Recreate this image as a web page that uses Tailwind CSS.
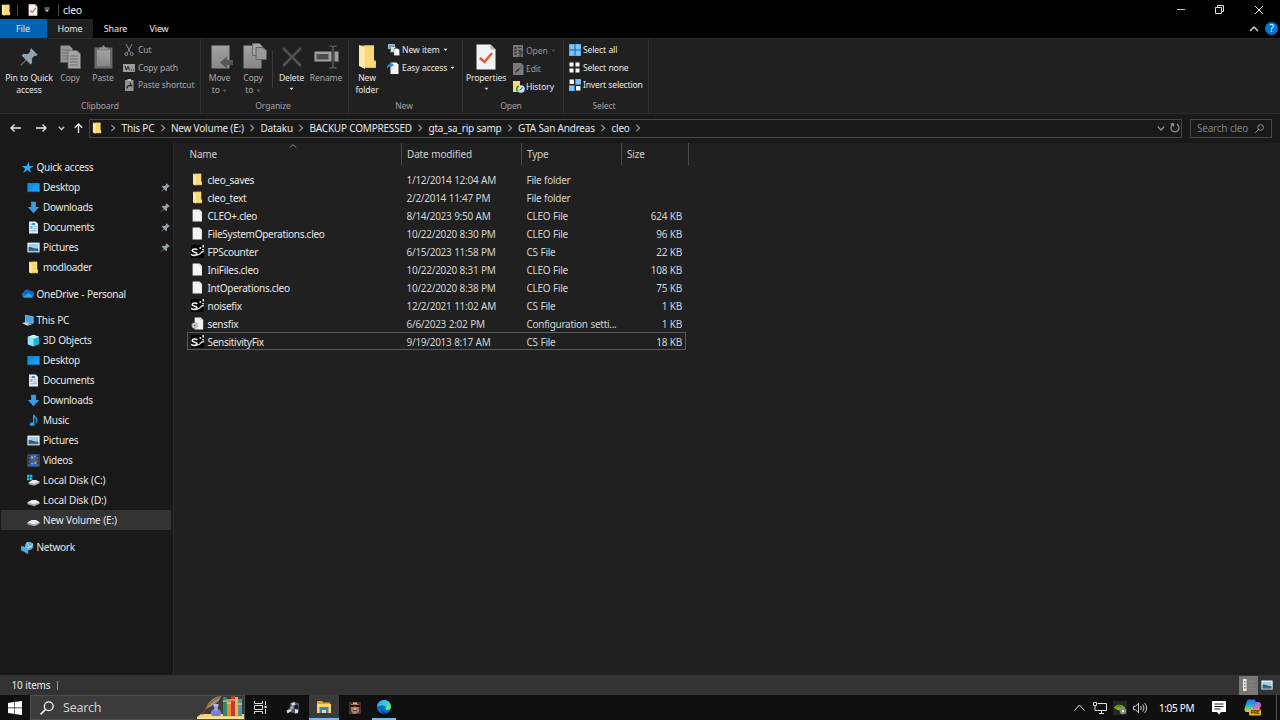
<!DOCTYPE html>
<html lang="en">
<head>
<meta charset="utf-8">
<title>cleo</title>
<script src="https://cdn.jsdelivr.net/npm/@tailwindcss/browser@4"></script>
</head>
<body class="w-[1280px] h-[720px] overflow-hidden bg-[#202020] text-[#e8e8e8] font-['Noto_Sans','Open_Sans',sans-serif] text-[10px] leading-[12px] tracking-[-0.280px] [word-spacing:0.400px] select-none">
<svg class="absolute w-0 h-0">
  <defs>
    <linearGradient id="gFold" x1="0" x2="1" y1="0" y2="1"><stop offset="0" stop-color="#f7d774"/><stop offset="1" stop-color="#fbdc7c"/></linearGradient>
    <linearGradient id="gDesk" x1="0" x2="1" y1="0" y2="1"><stop offset="0" stop-color="#0a84dc"/><stop offset="1" stop-color="#21a9ff"/></linearGradient>
    <linearGradient id="gGray" x1="0" x2="0" y1="0" y2="1"><stop offset="0" stop-color="#a2a2a2"/><stop offset="1" stop-color="#868686"/></linearGradient>
    <linearGradient id="gEdge" x1="0" x2="1" y1="0" y2="0.6"><stop offset="0" stop-color="#1b9de2"/><stop offset="0.5" stop-color="#35c1f1"/><stop offset="1" stop-color="#66eb6e"/></linearGradient>
    <linearGradient id="gCop1" x1="0" x2="0" y1="0" y2="1"><stop offset="0" stop-color="#2870ea"/><stop offset="0.5" stop-color="#22b8cf"/><stop offset="1" stop-color="#f5c518"/></linearGradient>
    <linearGradient id="gCop2" x1="0" x2="0" y1="0" y2="1"><stop offset="0" stop-color="#8f6df0"/><stop offset="0.5" stop-color="#e86ab5"/><stop offset="1" stop-color="#ff8a4c"/></linearGradient>
  </defs>
  <symbol id="folder" viewBox="0 0 16 16"><path d="M2.500 1h10v9.500h1V15H5.500z" fill="#e3b04f"/><path d="M5.500 1h7v10h.7v3.200H5.500z" fill="url(#gFold)"/><path d="M2.500.8l3.500 1.700V15.500L2.500 14z" fill="#ffe9a6"/></symbol>
  <symbol id="file" viewBox="0 0 16 16"><path d="M2 .5h8.500l3 3v12H2z" fill="#f4f4f4"/><path d="M10.500 .5v3h3z" fill="#b9b9b9"/></symbol>
  <symbol id="cs" viewBox="0 0 16 16"><path d="M0 0h16v16H0z" fill="#050505"/><path d="M7.800 6C6 4.300 1.500 4.500 1.500 6.800c0 2.700 6 1.500 6 4 0 2.500-4.500 2.500-7.500.8" fill="none" stroke="#f2f2f2" stroke-width="2"/><path d="M7.500 12c4.500 1 3.500-4.500 8.500-4" fill="none" stroke="#e0e0e0" stroke-width="1.600"/><path d="M14 0h2v3h-2zM10.500 2.500h2v2.500h-2zM13.500 5H16v1.500h-2.500z" fill="#ddd"/></symbol>
  <symbol id="conf" viewBox="0 0 16 16"><path d="M4.500.5h7.500l3 3v12H4.500z" fill="#f1f1f1"/><path d="M12 .5v3h3z" fill="#aaa"/><circle cx="4.500" cy="10.500" r="3.300" fill="#dfe5ea" stroke="#8f9aa3" stroke-width="1.600" stroke-dasharray="1.500 1"/><circle cx="4.500" cy="10.500" r="1.200" fill="#55606a"/></symbol>
  <symbol id="star" viewBox="0 0 16 16"><path d="M9.500 1l.8 5 5.200.4-4.600 2.800 1.200 5.300-4-3.400-5.600 3.600 2.600-5.200L1 6l5.800.1z" fill="#2fa9f5"/></symbol>
  <symbol id="desktop" viewBox="0 0 16 16"><path d="M.5 2.500h15v11H.5z" fill="url(#gDesk)"/><path d="M.5 12.700h15v1H.5z" fill="#0b5fa8"/></symbol>
  <symbol id="down" viewBox="0 0 16 16"><path d="M5 1h6v6.500h4L8 15 1 7.500h4z" fill="#3b9be8"/></symbol>
  <symbol id="doc" viewBox="0 0 16 16"><path d="M2.500.5h8l3 3v12h-11z" fill="#e9edf0"/><path d="M4 3.500h4v1H4zM4 6h3v3.500H4zM8 6.500h4v1H8zM8 9h4v1H8zM4 11.500h8v1H4z" fill="#7fb0da"/><path d="M6 2.500h4v2.500H6z" fill="#3b93d8"/></symbol>
  <symbol id="pic" viewBox="0 0 16 16"><path d="M.5 2h15v12H.5z" fill="#f4f4f4"/><path d="M2 3.500h12v9H2z" fill="#9ed0ee"/><path d="M2 7.500c3-1 6 2 12 2v3H2z" fill="#2e5f6c"/><path d="M2 11.300h12v1.200H2z" fill="#3d7cc0"/></symbol>
  <symbol id="cloud" viewBox="0 0 16 16"><path d="M3.500 13A3.500 3.500 0 0 1 3 6.500 5 5 0 0 1 11.500 5 4 4 0 0 1 13 13z" fill="#0f6cbd"/><path d="M2 12.500L9 7.500l5 3.200C13.800 12.500 13 13 12 13H4z" fill="#2aa4f0"/></symbol>
  <symbol id="pc" viewBox="0 0 16 16"><path d="M5.500 1.500l9.500 2v8l-9.500-1.500z" fill="#3ba7ee" stroke="#b8d7ea" stroke-width=".8"/><path d="M1 11l4.500-1 8 2.500L8 14.500z" fill="#d9dde0"/><path d="M8 12.500l3 1" stroke="#777"/></symbol>
  <symbol id="cube" viewBox="0 0 16 16"><path d="M8 .8l7 2.500v9.400L8 15.500l-7-2.800V3.300z" fill="#26b3d3"/><path d="M1 3.300l7 2.400v9.800l-7-2.800z" fill="#8fe6f4"/><path d="M8 .8l7 2.500-7 2.400-7-2.400z" fill="#c9f5fa"/></symbol>
  <symbol id="music" viewBox="0 0 16 16"><path d="M8.200 1c.3 3 4 3.500 4 6.500 0 1.300-.7 2.300-1.200 3" fill="none" stroke="#1fa2f2" stroke-width="1.700"/><path d="M7.400 1h1.700v11.500H7.400z" fill="#1fa2f2"/><ellipse cx="6.300" cy="12.500" rx="2.900" ry="2.400" fill="#1fa2f2"/></symbol>
  <symbol id="video" viewBox="0 0 16 16"><path d="M.5.500h15v15H.5z" fill="#5a5a5a"/><path d="M1.500 2h1.500v2H1.500zM1.500 6h1.500v2H1.500zM1.500 10h1.500v2H1.500zM13 2h1.500v2H13zM13 6h1.500v2H13zM13 10h1.500v2H13z" fill="#111"/><path d="M4 .5h8v7H4zM4 8.500h8v7H4z" fill="#2c5fd0"/><path d="M5 3h2.500v2.500H5zM9 9.500h2.500V12H9z" fill="#d8a637"/><path d="M8.500 2h2v2h-2zM5 11h3v2H5z" fill="#6fa7ee"/></symbol>
  <symbol id="disk" viewBox="0 0 16 16"><path d="M.5 10.500L6 7.500h5l4.500 2.500v2L9 15 .5 12.500z" fill="#a9a9a9"/><path d="M.5 10.500L6 7.500h5l4.500 2.500L9 12.500z" fill="#ececec"/></symbol>
  <symbol id="diskc" viewBox="0 0 16 16"><path d="M2 10.500L7 7.500h4l4.500 2v2L9 14.500 2 12.500z" fill="#a9a9a9"/><path d="M2 10.500L7 7.500h4l4.500 2L9 12z" fill="#ececec"/><path d="M0 1h3v3H0zM3.600 1h3v3h-3zM0 4.600h3v3H0zM3.600 4.600h3v3h-3z" fill="#1cbcf0"/></symbol>
  <symbol id="net" viewBox="0 0 16 16"><circle cx="10" cy="6" r="5.200" fill="#5aa9dc"/><path d="M7 2c3 1 1 4 4 5s3-4 3-4M6 9l6-2" stroke="#cfe8f7" fill="none" stroke-width="1.200"/><path d="M.5 6.500l8 2v6l-8-3z" fill="#35aef5" stroke="#a5d8f5" stroke-width=".6"/><path d="M5 14l4 1.500" stroke="#5db7ea"/></symbol>
  <symbol id="pin" viewBox="0 0 16 16"><path d="M10 .3L15.700 6l-1.400 1.100-1.300-.3-2.500 2.600.4 3.700-1.600 1.500-3.700-3.700L1 15.500.5 15l4.600-4.600-3.700-3.700L2.900 5.100l3.700.4 2.600-2.500-.3-1.300z"/></symbol>
  <symbol id="mag" viewBox="0 0 16 16"><circle cx="10" cy="6" r="5" fill="none" stroke="currentColor" stroke-width="1.500"/><path d="M6.500 9.500L.7 15.300" stroke="currentColor" stroke-width="1.700"/></symbol>
  <symbol id="chev" viewBox="0 0 8 8"><path d="M2.300.8L5.700 4 2.300 7.200" fill="none" stroke="#a0a0a0" stroke-width="1.100"/></symbol>
  <symbol id="drop" viewBox="0 0 6 4"><path d="M.6.600h4.800L3 3.200z" fill="currentColor"/></symbol>
  <symbol id="propsheet" viewBox="0 0 20 26"><path d="M.5.500h14l5 5v20H.5z" fill="#f3f3f3"/><path d="M14.500.5v5h5z" fill="#b5b5b5"/><path d="M4 14l4.500 4L16 9" fill="none" stroke="#e4572e" stroke-width="2.400"/></symbol>
</svg>

<div class="flex flex-col w-full h-full">
  <!-- Title bar -->
  <header class="flex items-center h-[19px] bg-black">
    <svg class="w-3 h-3"><use href="#folder"/></svg>
    <div class="w-px h-3 ml-[5px] bg-[#4a4a4a]"></div>
    <svg class="w-[10px] h-3 ml-[10px]"><use href="#propsheet"/></svg>
    <svg class="w-[6px] h-[6px] ml-[6px]" viewBox="0 0 6 6"><path d="M.5 1h5" stroke="#ccc" stroke-width=".9"/><path d="M.5 2.500h5L3 5z" fill="#ccc"/></svg>
    <div class="w-px h-3 ml-2 bg-[#4a4a4a]"></div>
    <span class="ml-1 text-[10.500px]">cleo</span>
    <div class="flex items-center ml-auto mr-[17px]">
      <svg class="w-2 h-2 mr-[30px]" viewBox="0 0 8 8"><path d="M0 3.500h8" stroke="#ccc"/></svg>
      <svg class="w-[9px] h-[9px] mr-[31px]" viewBox="0 0 9 9" fill="none" stroke="#ddd"><path d="M.5 2.500h6v6h-6zM2.500 2.500v-2h6v6h-2"/></svg>
      <svg class="w-2 h-2" viewBox="0 0 8 8"><path d="M0 0l8 8M8 0L0 8" stroke="#eee"/></svg>
    </div>
  </header>
  <nav class="flex h-[19px] bg-black text-[9px] leading-[19px] tracking-[-0.150px] text-center">
    <span class="w-[47px] pr-px bg-[#0063b1]">File</span>
    <span class="w-[46px] bg-[#202020]">Home</span>
    <span class="w-[45px]">Share</span>
    <span class="w-[42px]">View</span>
    <svg class="w-[10px] h-[6px] ml-auto mt-[7px] mr-[6px]" viewBox="0 0 10 6"><path d="M1 5l4-4 4 4" fill="none" stroke="#ccc" stroke-width="1.500"/></svg>
    <span class="w-[13px] h-[13px] mt-[3px] mr-[2px] rounded-full bg-[#0078d7] text-white leading-[13px] text-[10px]">?</span>
  </nav>

  <!-- Ribbon -->
  <section class="flex h-[76px] bg-[#202020] border-t border-b border-[#2c2c2c] text-[8.600px] leading-[12px] tracking-[-0.150px]">
    <div class="flex flex-col w-[201px] border-r border-[#333]">
      <div class="flex h-[61px]">
        <div class="flex flex-col items-center w-[58px] text-center"><svg class="w-[18px] h-[18px] mt-[9px] mb-[6px] fill-[#94a3ab]"><use href="#pin"/></svg><span class="whitespace-nowrap">Pin to Quick<br>access</span></div>
        <div class="flex flex-col items-center w-6 text-[#a8a8a8]"><svg class="w-[21px] h-6 mt-[6px] mb-[3px]" viewBox="0 0 21 24"><path d="M.5.500h9l3 3v14H.5z" fill="#969696"/><path d="M2.500 5h7M2.500 8h7M2.500 11h7M2.500 14h5" stroke="#6c6c6c"/><path d="M8 5.500h9l3.500 3.500v14.500H8z" fill="#a5a5a5" stroke="#666" stroke-width=".7"/><path d="M10 11h8M10 14h8M10 17h8M10 20h8" stroke="#6c6c6c"/></svg>Copy</div>
        <div class="flex flex-col items-center w-[38px] ml-[2px] text-[#a8a8a8]"><svg class="w-[19px] h-6 mt-[6px] mb-[3px]" viewBox="0 0 19 24"><path d="M.5 2.500h18v21H.5z" fill="#6a6a6a"/><path d="M3 5h13v16H3z" fill="url(#gGray)"/><path d="M5 2.500h2.500L9.500 0l2 2.500H14V6H5z" fill="#8c8c8c"/></svg>Paste</div>
        <div class="flex flex-col gap-[5.500px] pt-[5px] ml-px text-[#a8a8a8] whitespace-nowrap">
          <div class="flex items-center h-3 gap-[3px]"><svg class="w-3 h-3" viewBox="0 0 12 12" fill="none" stroke="#8a8a8a"><path d="M3 0l4.500 8.500M9 0L4.500 8.500"/><circle cx="3.300" cy="10" r="1.500"/><circle cx="8.700" cy="10" r="1.500"/></svg>Cut</div>
          <div class="flex items-center h-3 gap-[3px]"><svg class="w-3 h-3" viewBox="0 0 12 12"><path d="M0 2h12v8H0z" fill="#999"/><path d="M2 4l1.500 4L5 4.500l1.500 3.500M8 8h1M10 8h1" stroke="#222" fill="none"/></svg>Copy path</div>
          <div class="flex items-center h-3 gap-[3px]"><svg class="w-3 h-3" viewBox="0 0 12 12"><path d="M2 1h8.500v11H2z" fill="#929292"/><path d="M4.500 0h3.500v2H4.500z" fill="#bbb"/><path d="M4 9.500c0-3 2-3 3.500-3V5L9 7.500" fill="none" stroke="#222" stroke-width="1.300"/></svg>Paste shortcut</div>
        </div>
      </div>
      <span class="text-center text-[#a0a0a0]">Clipboard</span>
    </div>
    <div class="flex flex-col w-[148px] border-r border-[#333]">
      <div class="flex h-[61px] text-center text-[#a8a8a8]">
        <div class="flex flex-col items-center w-[37px]"><svg class="w-[22px] h-6 mt-[6px] mb-[3px] ml-[4px]" viewBox="0 0 22 24"><path d="M.5.500h18v23H.5z" fill="url(#gGray)"/><path d="M9 17.500l7-6v3.500h6v5h-6v3.500z" fill="#555"/></svg><span>Move<br>to <svg class="inline w-[5px] h-1 text-[#666]"><use href="#drop"/></svg></span></div>
        <div class="flex flex-col items-center w-[30px]"><svg class="w-[24px] h-[26px] mt-1 mb-[3px] ml-[4px]" viewBox="0 0 24 26"><path d="M.5 2.500h18v23H.5z" fill="url(#gGray)"/><path d="M9.500.5h7l3 3v9h-10z" fill="#a4a4a4" stroke="#666"/><path d="M13 4.500h7l3.500 3v9H13z" fill="#999" stroke="#606060"/></svg><span>Copy<br>to <svg class="inline w-[5px] h-1 text-[#666]"><use href="#drop"/></svg></span></div>
        <div class="w-px h-[37px] mt-3 ml-[4px] bg-[#3c3c3c]"></div>
        <div class="flex flex-col items-center w-[37px] text-[#e8e8e8]"><svg class="w-5 h-5 mt-2 mb-[5px]" viewBox="0 0 20 20"><path d="M1 1l18 18M19 1L1 19" stroke="#505050" stroke-width="2.600"/></svg>Delete<svg class="w-[5px] h-1 mt-[3px] text-[#e8e8e8]"><use href="#drop"/></svg></div>
        <div class="flex flex-col items-center w-[32px]"><svg class="w-[25px] h-6 mt-[6px] mb-[3px]" viewBox="0 0 25 24"><path d="M.5 6.500h24v10H.5z" fill="#a0a0a0"/><path d="M2.500 9h12v5.500h-12z" fill="#4c4c4c"/><path d="M17.500 6h3v11h-3z" fill="#202020"/><path d="M15.500 1h2l1.500 1 1.500-1h2M19 2v20M15.500 23h2l1.500-1 1.500 1h2" fill="none" stroke="#777"/></svg>Rename</div>
      </div>
      <span class="text-center pr-[3px] text-[#a0a0a0]">Organize</span>
    </div>
    <div class="flex flex-col w-[114px] border-r border-[#333]">
      <div class="flex h-[61px] whitespace-nowrap">
        <div class="flex flex-col items-center w-[36px] text-center"><svg class="w-[25px] h-[27px] mt-[5px] mb-px" viewBox="0 0 25 27"><path d="M4 1.500h15v15h2V24H8z" fill="#e6b95a"/><path d="M9 1.500h10V17h1.500v6H9z" fill="url(#gFold)"/><path d="M4 1l6 3v21l-6-3z" fill="#ffe9a6"/></svg><span>New<br>folder</span></div>
        <div class="flex flex-col gap-[5.500px] pt-[5px] ml-[2px]">
          <div class="flex items-center h-3 gap-[2px]"><svg class="w-[13px] h-3" viewBox="0 0 13 12"><path d="M1 0h7v5H1z" fill="#88b9d8"/><path d="M3.500 2.500h5v6h-5z" fill="#d4e2ea" stroke="#444" stroke-width=".5"/><path d="M7 4.500h4l1.500 1.500v5.500H7z" fill="#fff" stroke="#555" stroke-width=".5"/></svg>New item<svg class="w-[5px] h-1 ml-px"><use href="#drop"/></svg></div>
          <div class="flex items-center h-3 gap-[2px]"><svg class="w-[13px] h-3" viewBox="0 0 13 12"><path d="M3.500.5h6l2 2V12h-8z" fill="#f4f4f4"/><path d="M0 6.500C0 3 2 2 4 2V.5L7 3 4 5.200V4C2.500 4 1 5 .8 6.500z" fill="#2f8fd8"/></svg>Easy access<svg class="w-[5px] h-1 ml-px"><use href="#drop"/></svg></div>
        </div>
      </div>
      <span class="text-center pr-[3px] text-[#a0a0a0]">New</span>
    </div>
    <div class="flex flex-col w-[101px] border-r border-[#333]">
      <div class="flex h-[61px] whitespace-nowrap">
        <div class="flex flex-col items-center w-[46px]"><svg class="w-5 h-[26px] mt-[5px] mb-[2px]"><use href="#propsheet"/></svg>Properties<svg class="w-[5px] h-1 mt-[3px]"><use href="#drop"/></svg></div>
        <div class="flex flex-col gap-[6px] pt-[6px] ml-[4px]">
          <div class="flex items-center h-3 gap-[2px] text-[#969696]"><svg class="w-[11px] h-3" viewBox="0 0 11 12"><path d="M0 0h10v12H0z" fill="#777"/><path d="M1.500 2h2v2h-2zM1.500 5h2v2h-2zM1.500 8h2v2h-2zM5 2h3.500v1H5zM5 5h3.500v1H5z" fill="#333"/><path d="M7.500 5l3 3.500h-2V12h-2V8.500h-2z" fill="#444"/></svg>Open<svg class="w-[5px] h-1 ml-px text-[#555]"><use href="#drop"/></svg></div>
          <div class="flex items-center h-3 gap-[2px] text-[#969696]"><svg class="w-[11px] h-3" viewBox="0 0 11 12"><path d="M0 0h8l2.500 2.500V12H0z" fill="#7a7a7a"/><path d="M9.500 3L4 9l-2 1 .5-2z" fill="#333"/></svg>Edit</div>
          <div class="flex items-center h-3 gap-[2px]"><svg class="w-[12px] h-3 -mr-px" viewBox="0 0 12 12"><path d="M0 0h7v11H0z" fill="url(#gFold)"/><circle cx="8" cy="8" r="3.800" fill="#d9dee0"/><path d="M4.500 10.500A3.800 3.800 0 0 1 6 4.800" fill="none" stroke="#21a336" stroke-width="1.800"/><path d="M6.500 9l2-1 1-2" fill="none" stroke="#457"/></svg>History</div>
        </div>
      </div>
      <span class="text-center pr-[4px] text-[#a0a0a0]">Open</span>
    </div>
    <div class="flex flex-col w-[85px] border-r border-[#333]">
      <div class="flex flex-col gap-[5.500px] h-[61px] pt-[5px] pl-[5px] whitespace-nowrap">
        <div class="flex items-center h-3 gap-[3px]"><svg class="w-[12px] h-[12px] -mr-px" viewBox="0 0 11 11"><path d="M0 0h5v5H0zM6 0h5v5H6zM0 6h5v5H0zM6 6h5v5H6z" fill="#82c3f3"/><path d="M0 0h5v5H0zM6 0h5v5H6zM0 6h5v5H0zM6 6h5v5H6z" fill="none" stroke="#3d9fe6" stroke-width=".8"/></svg>Select all</div>
        <div class="flex items-center h-3 gap-[3px]"><svg class="w-[11px] h-[11px]" viewBox="0 0 11 11"><path d="M.5.500h4v4h-4zM6.500.5h4v4h-4zM.5 6.500h4v4h-4zM6.500 6.500h4v4h-4z" fill="#fff"/></svg>Select none</div>
        <div class="flex items-center h-3 gap-[3px] tracking-[-0.200px]"><svg class="w-[12px] h-[12px] -mr-px" viewBox="0 0 11 11"><path d="M.5.500h4v4h-4zM6.500 6.500h4v4h-4z" fill="#fff"/><path d="M6 0h5v5H6zM0 6h5v5H0z" fill="#82c3f3" stroke="#3d9fe6" stroke-width=".6"/></svg>Invert selection</div>
      </div>
      <span class="text-center pr-[4px] text-[#a0a0a0]">Select</span>
    </div>
  </section>

  <!-- Address bar -->
  <section class="flex items-center h-[29px] pb-px bg-[#191919]">
    <svg class="w-[11px] h-[8px] ml-[10px]" viewBox="0 0 11 8" fill="none" stroke="#eee" stroke-width="1.300"><path d="M11 4H1M4.500.500L1 4l3.500 3.500"/></svg>
    <svg class="w-[11px] h-[8px] ml-[15px]" viewBox="0 0 11 8" fill="none" stroke="#eee" stroke-width="1.300"><path d="M0 4h10M6.500.500L10 4 6.500 7.500"/></svg>
    <svg class="w-[7px] h-[5px] ml-[11px]" viewBox="0 0 7 5" fill="none" stroke="#ccc" stroke-width="1.300"><path d="M.8.800l2.700 2.700L6.200.8"/></svg>
    <svg class="w-[9px] h-[10px] ml-[9px]" viewBox="0 0 9 10" fill="none" stroke="#eee" stroke-width="1.300"><path d="M4.500 10V1M.8 4.700L4.500 1l3.700 3.700"/></svg>
    <div class="flex items-center w-[1093px] h-[19px] ml-[6px] border border-[#484848]">
      <svg class="w-3 h-3 ml-px"><use href="#folder"/></svg>
      <div id="crumbs" class="flex items-center ml-[2px] whitespace-nowrap tracking-[-0.200px] [word-spacing:0]"></div>
      <svg class="w-[8px] h-[5px] ml-auto mr-[5px]" viewBox="0 0 8 5" fill="none" stroke="#9a9a9a" stroke-width="1.200"><path d="M.8.600L4 4 7.200.6"/></svg>
      <svg class="w-[10px] h-[10px] mr-px" viewBox="0 0 10 10" fill="none" stroke="#9a9a9a" stroke-width="1.200"><path d="M6.800 1.300a4 4 0 1 1-3.600 0M.8.800h2.700v2.800"/></svg>
    </div>
    <div class="flex items-center justify-between w-[82px] h-[19px] ml-2 pl-[6px] pr-[7px] border border-[#484848] text-[#808080] tracking-[-0.250px]">Search cleo<svg class="w-[9px] h-[9px] text-[#aaa]"><use href="#mag"/></svg></div>
  </section>

  <main class="flex flex-1 min-h-0">
    <aside id="tree" class="w-[174px] pt-[14px] bg-[#191919] border-r border-[#2b2b2b]"></aside>
    <section class="flex-1 relative pl-[13px]">
      <div class="flex h-[22px] pl-px leading-[23px] text-[#d0d0d0] tracking-[-0.170px]">
        <svg class="absolute left-[115px] top-[1px] w-[8px] h-[4px]" viewBox="0 0 7 4"><path d="M.5 3.500l3-3 3 3" fill="none" stroke="#aaa" stroke-width=".8"/></svg>
        <span class="w-[214px] pl-[1.500px] border-r border-[#484848]">Name</span><span class="w-[120px] pl-[5px] border-r border-[#484848]">Date modified</span><span class="w-[100px] pl-[5px] border-r border-[#484848]">Type</span><span class="w-[67px] pl-[5px] border-r border-[#484848]">Size</span>
      </div>
      <div id="files" class="mt-[5px]"></div>
    </section>
  </main>

  <!-- Status bar -->
  <footer class="flex items-center h-[20px] pl-[11.500px] bg-[#333] tracking-[-0.200px]">
    <span>10 items</span><div class="w-px h-[9px] ml-[7px] bg-[#999]"></div>
    <div class="flex items-center justify-center w-[19px] h-[19px] ml-auto bg-[#777]"><svg class="w-[13px] h-[12px]" viewBox="0 0 13 12"><path d="M1 0h3.500v12H1z" fill="#eee"/><path d="M2 2h1.500v1.500H2zM2 8h1.500v1.500H2z" fill="#c55"/><path d="M2 5h1.500v1.500H2z" fill="#57a"/><path d="M5.500 2.500H13M5.500 6H13M5.500 9.500H13" stroke="#858585"/></svg></div>
    <svg class="w-3 h-3 ml-[3px] mr-[7px]"><use href="#pic"/></svg>
  </footer>

  <!-- Taskbar -->
  <footer class="flex items-center h-[25px] bg-[#101010]">
    <svg class="w-[14px] h-[14px] ml-2" viewBox="0 0 14 14" fill="#fff"><path d="M0 2l6-.9v5.500H0zM6.600 1L14 0v6.600H6.600zM0 7.300h6v5.500L0 12zM6.600 7.300H14V14l-7.400-1z"/></svg>
    <div class="flex items-center w-[215px] h-[25px] ml-2 pl-[9px] bg-[#3b3b3b] border border-[#4d4d4d] text-[12.500px] text-[#cfcfcf] tracking-[-0.200px]">
      <svg class="w-[14px] h-[14px] text-white mr-[9px]"><use href="#mag"/></svg><span>Search</span>
      <svg class="w-[47px] h-[23px] ml-auto" viewBox="0 0 47 23"><path d="M0 21l4-3h43v5H0z" fill="#f2cf7c"/><path d="M0 21h47v2H0z" fill="#fbe3a0"/><path d="M8 14C11 6 16 1 24 0c-1 6-7 9-15 13z" fill="#a58a6c"/><path d="M5 19C9 10 15 4 23 1" fill="none" stroke="#6f5a48"/><path d="M17 10h4v3c5 2 4 7 1 7h-6c-3-1-3-6 1-7z" fill="#7583c9"/><path d="M17.500 11h3v4h-3z" fill="#9aa5e0"/><path d="M16.500 8h5v2.500h-5z" fill="#b8bfe6"/><path d="M26 1h4v19h-4z" fill="#2f8a68"/><path d="M30 3h4v17h-4z" fill="#e5883a"/><path d="M34 0h4v20h-4z" fill="#c43a2e"/><path d="M38 1h3v19h-3z" fill="#f0b34c"/><path d="M41 3h4v17h-4z" fill="#4f9b93"/><path d="M26 5h4M30 7h4M34 4h4M41 8h4" stroke="#f7dfa0"/></svg>
    </div>
    <div class="flex items-center justify-center w-[32px] h-full"><svg class="w-[15px] h-[13px] ml-[-2px]" viewBox="0 0 15 13" fill="none" stroke="#ddd"><path d="M1.500 0v2.500h8V0M1.500 13v-2.500h8V13M1.500 4.500h8v4h-8zM12.500 0v4M12.500 8v5"/><path d="M11.500 5h2v2h-2z" fill="#fff" stroke="none"/></svg></div>
    <div class="flex items-center justify-center w-[32px] h-full"><svg class="w-[14px] h-[14px]" viewBox="0 0 14 14"><path d="M4 2.500l4-2 5 2v8l-4 2-5-1.500-3.500 1 1-3 2-2z" fill="#4c5560"/><path d="M5 2.500L8.500 1l1 2.500-3 1.500zM.5 9.500l4-1.500 1 2-4 2.500zM9 8l3 1v3l-3 .5z" fill="#d5dade"/><path d="M4 6l3-1 1 2-3 2z" fill="#9eabb8"/><path d="M8 5l3-1 2 3-4 1z" fill="#15181c"/></svg></div>
    <div class="flex items-center justify-center w-[30px] h-full bg-[#3a3a3a] border-b-2 border-[#76b9ed]"><svg class="w-[14px] h-3" viewBox="0 0 14 12"><path d="M0 0h5l1.500 1.500H13V4H0z" fill="#e8a313"/><path d="M0 3h14v9H0z" fill="#ffd767"/><path d="M2.500 6h9v6H9V9H5v3H2.500z" fill="#2f86d6"/></svg></div>
    <div class="flex items-center justify-center w-[31px] h-full"><svg class="w-3 h-3" viewBox="0 0 12 12"><path d="M0 0h12v12H0z" fill="#4b3025"/><path d="M2 2h8v8l-3 2H4L2 9z" fill="#a87862"/><path d="M1 3h10v2H7L6 4 5 5H1z" fill="#19110f"/><path d="M4 8.500h4M0 10l3 2M9 12l3-3" stroke="#6a4436"/><path d="M4 .5h4v1.500H4zM5 6h2v1.500H5z" fill="#d9b39a"/></svg></div>
    <div class="flex items-center justify-center w-[24px] ml-[2px] h-full border-b-2 border-[#76b9ed]"><svg class="w-[14px] h-[14px]" viewBox="0 0 14 14"><circle cx="7" cy="7" r="7" fill="#0c6cc0"/><path d="M0 7a7 7 0 0 1 14-.3c0 2.300-1.700 3.300-3.500 3.300-1.500 0-2.500-.7-2-1.500.6-1 .5-3.300-2.500-3.300C3 5.200.5 6.500 0 7z" fill="url(#gEdge)"/><path d="M5 6.500c-1.500 3 1 6 4.500 6 1.500 0 2.700-.6 3.300-1.200A7 7 0 0 1 8 14C4 14 3 9 5 6.500z" fill="#123f86"/></svg></div>
    <div class="flex items-center h-full ml-auto">
      <svg class="w-[11px] h-[7px]" viewBox="0 0 11 7"><path d="M.5 6.500l5-5.500 5 5.500" fill="none" stroke="#e5e5e5"/></svg>
      <svg class="w-[14px] h-3 ml-2" viewBox="0 0 14 12" fill="none" stroke="#ddd"><path d="M4.500 1.500h9v7h-9M8.500 8.500V11M6 11.500h5"/><path d="M.5.500h3v3h-3zM2 3.500v5h2.500" /></svg>
      <svg class="w-[14px] h-[14px] ml-[6px]" viewBox="0 0 14 14"><path d="M0 0h14v14H0z" fill="#252525"/><path d="M1 6.500C4 2.500 9 3 12 6.500 10 10 5 11 1 6.500z" fill="#76b900"/><path d="M3.500 6.500c2-2 4-1.500 5 0" fill="none" stroke="#3a5c00"/><circle cx="10" cy="10" r="3.300" fill="#888"/><circle cx="10" cy="10" r="1.200" fill="#eee"/></svg>
      <svg class="w-[15px] h-3 ml-[6px]" viewBox="0 0 15 12" fill="none" stroke="#e5e5e5" stroke-width=".9"><path d="M.5 4.300H2.500L5.500 1.300v9.400L2.500 7.700H.5zM7.500 4a3 3 0 0 1 0 4M9.500 2.500a5 5 0 0 1 0 7M11.700 1a7.500 7.500 0 0 1 0 10"/></svg>
      <span class="w-[35px] ml-[11px] whitespace-nowrap text-white tracking-[-0.400px]">1:05 PM</span>
      <svg class="w-[14px] h-[14px] ml-[18px]" viewBox="0 0 14 14"><path d="M0 0h14v11H9l-2 2.500L5 11H0z" fill="#fff"/><path d="M2.500 3h9M2.500 5.500h9M2.500 8h6" stroke="#222"/></svg>
      <svg class="w-[18px] h-[17px] ml-[18px]" viewBox="0 0 18 17"><path d="M5 .500h5c1.500 0 2 1.500 1.500 3L9 11c-.5 1.500-1.500 2-3 2H3c-2.500 0-3-2-2-5l2-6c.4-1 1-1.500 2-1.500z" fill="url(#gCop1)"/><path d="M11.500 3h2.500c2.500 0 3.500 2 2.700 4.500L15 11c-.6 2-1.500 3-3 3H8z" fill="url(#gCop2)"/><rect x="5" y="10.500" width="12" height="6" rx="1" fill="#e8b61c"/><text x="11" y="15.400" font-size="5" font-weight="700" text-anchor="middle" fill="#332600">PRE</text></svg>
      <div class="w-px h-[25px] ml-[14px] mr-[3px] bg-[#555]"></div>
    </div>
  </footer>
</div>

<script>
const crumbs = ['This PC','New Volume (E:)','Dataku','BACKUP COMPRESSED','gta_sa_rip samp','GTA San Andreas','cleo'];
const chev = '<svg class="w-2 h-2 mx-[4.300px]"><use href="#chev"/></svg>';
document.getElementById('crumbs').innerHTML = chev + crumbs.map(c => `<span>${c}</span>${chev}`).join('');

// icon, label, nested, pinned, selected
const tree = [
  ['star','Quick access',0,0],['desktop','Desktop',1,1],['down','Downloads',1,1],['doc','Documents',1,1],['pic','Pictures',1,1],['folder','modloader',1,0],null,
  ['cloud','OneDrive - Personal',0,0],null,
  ['pc','This PC',0,0],['cube','3D Objects',1,0],['desktop','Desktop',1,0],['doc','Documents',1,0],['down','Downloads',1,0],['music','Music',1,0],['pic','Pictures',1,0],['video','Videos',1,0],['diskc','Local Disk (C:)',1,0],['disk','Local Disk (D:)',1,0],['disk','New Volume (E:)',1,0,1],null,
  ['net','Network',0,0]];
document.getElementById('tree').innerHTML = tree.map(t => t === null ? '<div class="h-[6.700px]"></div>' :
  `<div class="flex items-center h-5 ${t[2] ? 'pl-[26px]' : 'pl-[19.500px]'} gap-[3px] ml-px mr-[2px] ${t[4] ? 'bg-[#333]' : ''}"><svg class="w-[13px] h-[13px] shrink-0"><use href="#${t[0]}"/></svg><span class="whitespace-nowrap ${t[1].includes(':') ? 'tracking-[-0.200px]' : ''}">${t[1]}</span>${t[3] ? '<svg class="w-[9px] h-[9px] ml-auto mr-px fill-[#94a3ab]"><use href="#pin"/></svg>' : ''}</div>`).join('');

const files = [
  ['folder','cleo_saves','1/12/2014 12:04 AM','File folder',''],
  ['folder','cleo_text','2/2/2014 11:47 PM','File folder',''],
  ['file','CLEO+.cleo','8/14/2023 9:50 AM','CLEO File','624 KB'],
  ['file','FileSystemOperations.cleo','10/22/2020 8:30 PM','CLEO File','96 KB'],
  ['cs','FPScounter','6/15/2023 11:58 PM','CS File','22 KB'],
  ['file','IniFiles.cleo','10/22/2020 8:31 PM','CLEO File','108 KB'],
  ['file','IntOperations.cleo','10/22/2020 8:38 PM','CLEO File','75 KB'],
  ['cs','noisefix','12/2/2021 11:02 AM','CS File','1 KB'],
  ['conf','sensfix','6/6/2023 2:02 PM','Configuration setti...','1 KB'],
  ['cs','SensitivityFix','9/19/2013 8:17 AM','CS File','18 KB']];
document.getElementById('files').innerHTML = files.map((f, i) =>
  `<div class="flex items-center w-[499px] h-[18px] border ${i === 9 ? 'border-[#5a5a5a]' : 'border-transparent'}"><svg class="w-[13px] h-[13px] ml-[2.500px] mr-[4px]"><use href="#${f[0]}"/></svg><div class="flex pt-[2px]"><span class="w-[199px]">${f[1]}</span><span class="w-[120px] text-[#d4d4d4]">${f[2]}</span><span class="w-[100px] text-[#d4d4d4]">${f[3]}</span><span class="w-[55.500px] text-right text-[#d4d4d4]">${f[4]}</span></div></div>`).join('');
</script>
</body>
</html>
